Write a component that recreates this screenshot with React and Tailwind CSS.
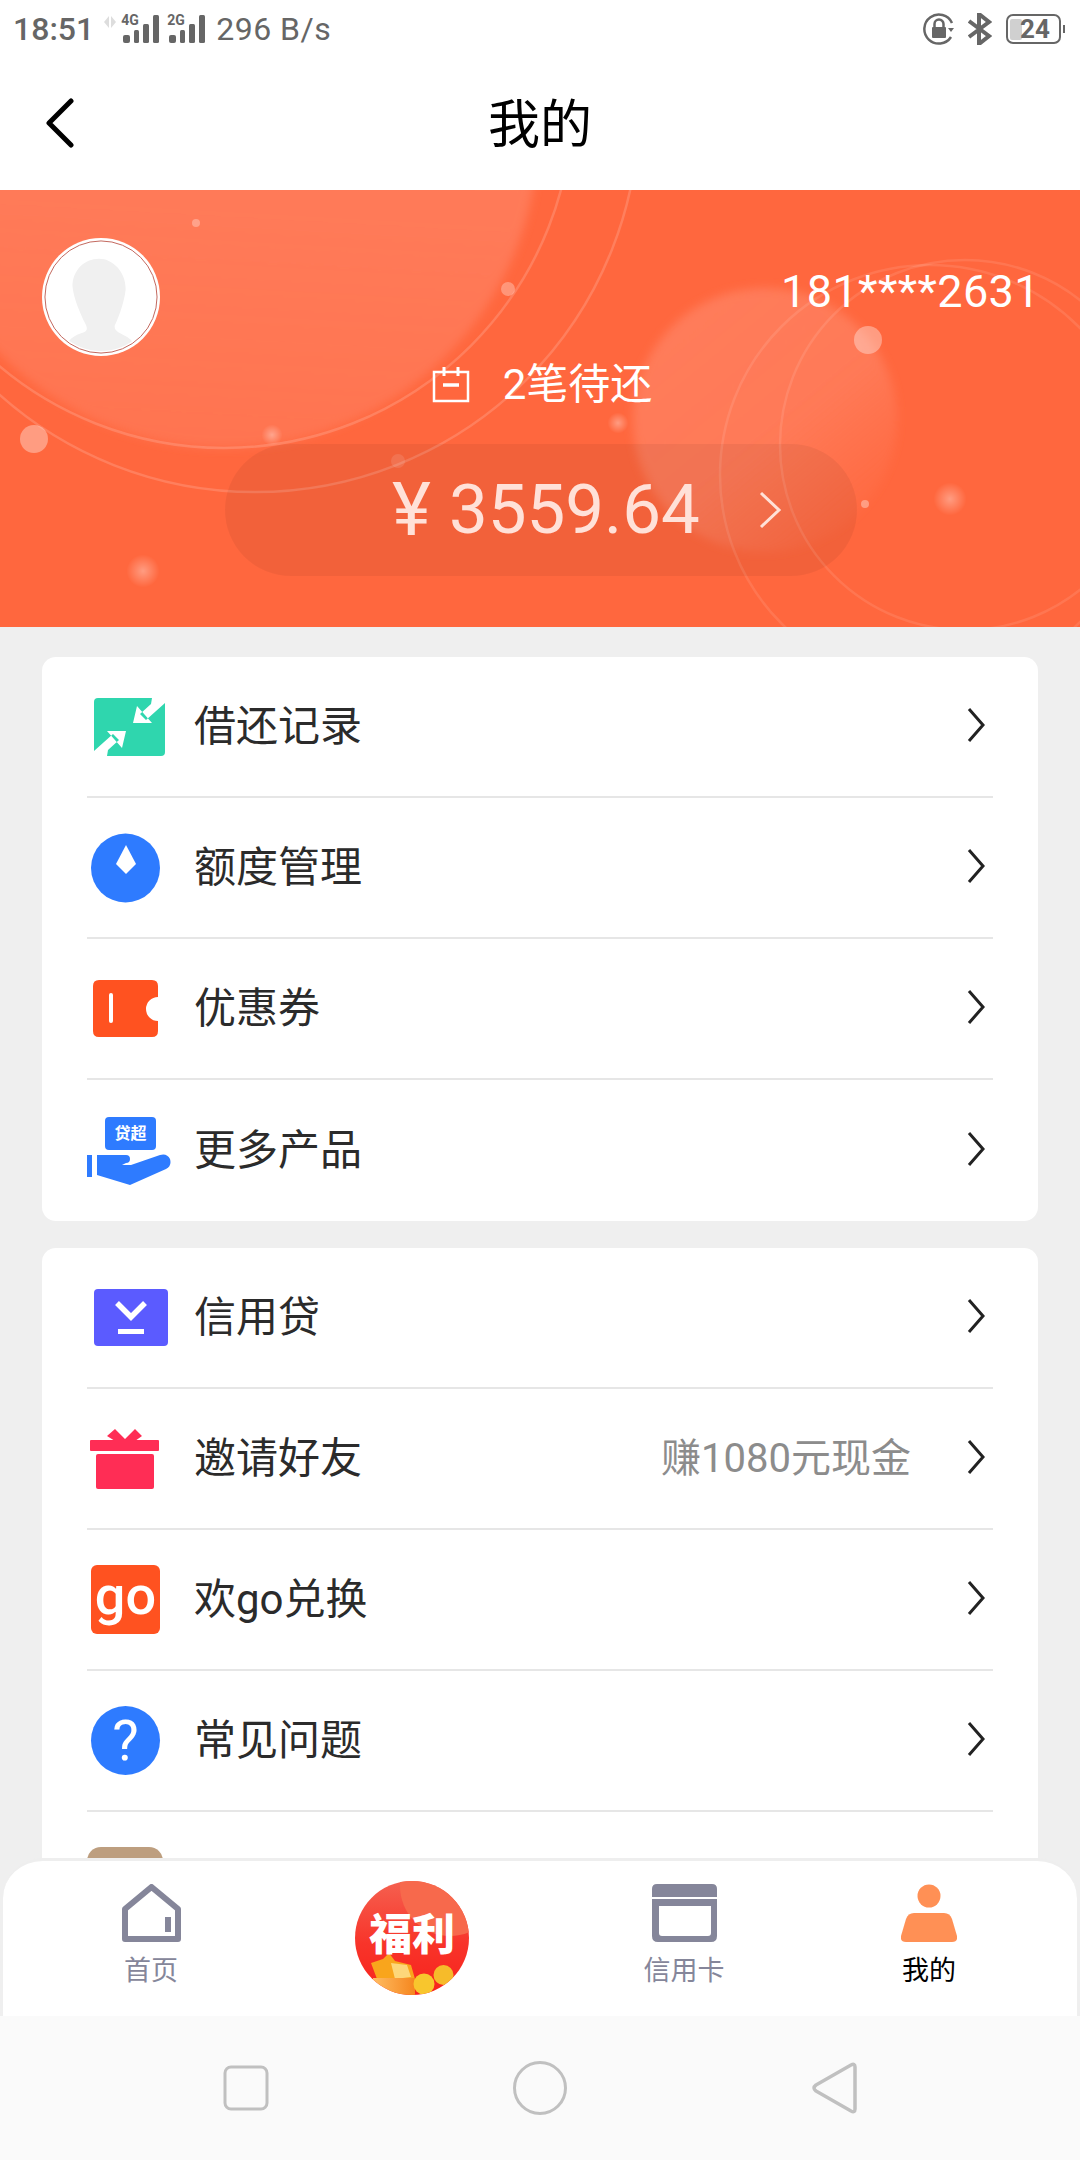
import React from "react";

function Chevron({ className = "" }) {
  return (
    <svg width="18" height="36" viewBox="0 0 18 36" className={className}>
      <path d="M2 2 L16 18 L2 34" fill="none" stroke="#222" strokeWidth="3" />
    </svg>
  );
}

function Bars({ label }) {
  return (
    <div className="relative w-[36px] h-[28px]">
      <svg width="36" height="28" viewBox="0 0 36 28" className="absolute left-0 top-0">
        <rect x="0" y="20" width="7" height="8" rx="2" fill="#666" />
        <rect x="11" y="15" width="5" height="13" rx="1.5" fill="#666" />
        <rect x="20" y="9" width="6" height="19" rx="1.5" fill="#666" />
        <rect x="30" y="0" width="6" height="28" rx="1.5" fill="#666" />
      </svg>
      <span className="absolute left-[-2px] top-[-2px] text-[14px] leading-[14px] font-bold text-[#666]">{label}</span>
    </div>
  );
}

function StatusBar() {
  return (
    <div className="h-[60px] bg-white flex items-center justify-between text-[#666]">
      <div className="flex items-center mb-[2px]">
        <span className="ml-[13px] text-[32px] leading-[40px] font-medium">18:51</span>
        <svg width="12" height="12" viewBox="0 0 12 12" className="ml-[10px] mb-[14px]">
          <path d="M5 0 V12 L0 6Z M7 0 L12 6 L7 12Z" fill="#ddd" />
        </svg>
        <div className="ml-[7px]">
          <Bars label="4G" />
        </div>
        <div className="ml-[10px]">
          <Bars label="2G" />
        </div>
        <span className="ml-[11px] text-[32px] leading-[40px] tracking-[0.5px]">296 B/s</span>
      </div>
      <div className="flex items-center mr-[15px] mb-[2px]">
        <svg width="32" height="32" viewBox="0 0 32 32">
          <path d="M29 10 A14.5 14.5 0 1 0 28 24" fill="none" stroke="#666" strokeWidth="2.5" />
          <path d="M25 15 L31 15 L28 19Z" fill="#666" />
          <rect x="9" y="14" width="14" height="11" rx="1" fill="#666" />
          <path d="M11.5 14 V11 A4.5 4.5 0 0 1 20.5 11 V14" fill="none" stroke="#666" strokeWidth="2.5" />
        </svg>
        <svg width="24" height="32" viewBox="0 0 24 32" className="ml-[13px]">
          <path d="M1 8 L21 23 L11 31 V1 L21 9 L1 24" fill="none" stroke="#666" strokeWidth="4" />
        </svg>
        <div className="relative ml-[14px] w-[55px] h-[30px] rounded-[7px] border-2 border-[#666] flex items-center">
          <div className="absolute left-[2px] top-[3px] w-[12px] h-[21px] bg-[#d0d0d0] rounded-[2px]" />
          <span className="relative ml-[12px] text-[26px] leading-[26px] font-bold text-[#666]">24</span>
        </div>
        <div className="ml-[2px] w-[2px] h-[8px] bg-[#666]" />
      </div>
    </div>
  );
}

function Header() {
  return (
    <div className="h-[130px] bg-white grid grid-cols-3 items-center">
      <svg width="30" height="50" viewBox="0 0 30 50" className="ml-[45px] mb-[5px]">
        <path d="M26 3 L4 25 L26 47" fill="none" stroke="#000" strokeWidth="5" strokeLinecap="round" strokeLinejoin="round" />
      </svg>
      <div className="text-center text-[52px] leading-[60px] text-black mt-[2px]">我的</div>
    </div>
  );
}

function BannerArt() {
  const dots = [
    [196, 33, 4, 0.3],
    [508, 99, 7, 0.3],
    [868, 150, 14, 0.35],
    [34, 249, 14, 0.35],
    [865, 314, 4, 0.35],
    [398, 271, 7, 0.12],
  ];
  const glows = [
    [272, 245, 7],
    [618, 233, 7],
    [950, 309, 11],
    [143, 381, 11],
  ];
  return (
    <svg width="1080" height="437" viewBox="0 0 1080 437" className="absolute left-0 top-0">
      <defs>
        <linearGradient id="blobA" x1="0.8" y1="0.1" x2="0.75" y2="1">
          <stop offset="0" stopColor="#ff7d5b" />
          <stop offset="0.6" stopColor="#ff7a58" />
          <stop offset="1" stopColor="#ff7a58" stopOpacity="0.7" />
        </linearGradient>
        <linearGradient id="blobB" x1="0.15" y1="0.1" x2="0.85" y2="0.95">
          <stop offset="0" stopColor="#ff7c5a" />
          <stop offset="0.55" stopColor="#ff7c5a" stopOpacity="0.9" />
          <stop offset="1" stopColor="#ff7c5a" stopOpacity="0" />
        </linearGradient>
        <radialGradient id="glow">
          <stop offset="0" stopColor="#fff" stopOpacity="0.35" />
          <stop offset="1" stopColor="#fff" stopOpacity="0" />
        </radialGradient>
        <filter id="soft" x="-20%" y="-20%" width="140%" height="140%">
          <feGaussianBlur stdDeviation="5" />
        </filter>
      </defs>
      <circle cx="224" cy="-56" r="314" fill="url(#blobA)" filter="url(#soft)" />
      <circle cx="765" cy="230" r="132" fill="url(#blobB)" filter="url(#soft)" />
      <g fill="none" stroke="#fff" strokeOpacity="0.16" strokeWidth="2.5">
        <circle cx="255" cy="-82" r="384" />
        <circle cx="224" cy="-91" r="349" />
      </g>
      <g fill="none" stroke="#fff" strokeOpacity="0.1" strokeWidth="2.5">
        <circle cx="930" cy="285" r="210" />
        <circle cx="965" cy="255" r="185" />
      </g>
      {dots.map(([x, y, r, o]) => (
        <circle key={x} cx={x} cy={y} r={r} fill="#fff" fillOpacity={o} />
      ))}
      {glows.map(([x, y, r]) => (
        <circle key={x} cx={x} cy={y} r={r * 1.5} fill="url(#glow)" />
      ))}
    </svg>
  );
}

function Banner() {
  return (
    <div className="relative h-[437px] overflow-hidden bg-[#ff673e]">
      <BannerArt />
      <div className="relative pt-[47px]">
        <div className="h-[120px] flex items-center justify-between">
          <svg width="118" height="120" viewBox="0 0 120 120" className="ml-[42px]">
            <defs>
              <clipPath id="avatarClip">
                <circle cx="60" cy="60" r="55" />
              </clipPath>
            </defs>
            <circle cx="60" cy="60" r="60" fill="#fff" />
            <circle cx="60" cy="60" r="57" fill="none" stroke="#c2665c" strokeWidth="1" />
            <path
              clipPath="url(#avatarClip)"
              d="M58 21 C73 21 86 36 85 53 C84 63 79 79 74 89 C73 95 79 96 87 101 C93 105 96 111 97 120 L21 120 C22 109 28 101 39 97 C46 95 47 93 44 87 C39 77 32 61 31 49 C31 33 43 21 58 21 Z"
              fill="#f0f0f0"
            />
          </svg>
          <span className="mr-[40px] mb-[10px] text-[45px] leading-[50px] tracking-[0.4px] text-white">181****2631</span>
        </div>
        <div className="mt-[6px] h-[44px] flex items-center justify-center text-white text-[42px] leading-[44px]">
          <svg width="38" height="36" viewBox="0 0 38 36" className="ml-[4px]">
            <path d="M2 5 H36 V34 H2 Z" fill="none" stroke="#fff" strokeWidth="2.5" />
            <path d="M12 0 V9 M26 0 V9" stroke="#fff" strokeWidth="3" />
            <path d="M11 18 H27" stroke="#fff" strokeWidth="3.5" />
          </svg>
          <span className="ml-[33px]">2笔待还</span>
        </div>
        <div className="mt-[37px] ml-[225px] w-[632px] h-[132px] rounded-full bg-black/5 flex items-center pl-[167px] text-[#ffe1d8]">
          <span className="w-[57px] text-[74px] leading-[70px]">¥</span>
          <span className="text-[69px] leading-[70px]">3559.64</span>
          <svg width="24" height="38" viewBox="0 0 24 38" className="ml-[58px]">
            <path d="M3 2 L21 19 L3 36" fill="none" stroke="#ffe1d8" strokeWidth="3" />
          </svg>
        </div>
      </div>
    </div>
  );
}

function IconTransfer() {
  return (
    <svg width="71" height="58" viewBox="0 0 71 58" className="ml-[7px]">
      <rect width="71" height="58" rx="4" fill="#2fd6ae" />
      <path d="M58 0 H71 V5 L52 22 L46 16 L57 6Z M43 8 L39 25 H58Z" fill="#fff" />
      <path d="M13 58 H0 V53 L19 36 L25 42 L14 52Z M28 50 L32 33 H13Z" fill="#fff" />
    </svg>
  );
}

function IconQuota() {
  return (
    <svg width="69" height="70" viewBox="0 0 69 70" className="ml-[4px]">
      <circle cx="34.5" cy="35" r="34.5" fill="#2e7bff" />
      <path d="M35 12 L45 31 L35 41 L25 31Z" fill="#fff" />
    </svg>
  );
}

function IconCoupon() {
  return (
    <svg width="65" height="57" viewBox="0 0 65 57" className="ml-[6px]">
      <path d="M6 0 H59 Q65 0 65 6 V17 A12 12 0 0 0 65 41 V51 Q65 57 59 57 H6 Q0 57 0 51 V6 Q0 0 6 0Z" fill="#ff5220" />
      <rect x="16" y="13" width="4" height="30" rx="2" fill="#fff" />
    </svg>
  );
}

function IconMore() {
  return (
    <svg width="84" height="68" viewBox="0 0 84 68">
      <rect x="18" y="0" width="51" height="33" rx="4" fill="#2e7bff" />
      <text x="43.5" y="22" textAnchor="middle" fontSize="16" fontWeight="700" fill="#fff">贷超</text>
      <rect x="0" y="38" width="5" height="22" fill="#2e7bff" />
      <path d="M10 38 H39 Q43 38 43 42 Q43 46 39 46 L35 48 H44 L73 38 Q80 36 83 42 Q85 49 79 52 L43 68 L10 58Z" fill="#2e7bff" />
    </svg>
  );
}

function IconLoan() {
  return (
    <svg width="74" height="57" viewBox="0 0 74 57" className="ml-[7px]">
      <rect width="74" height="57" rx="4" fill="#5b5bff" />
      <path d="M23 14 L37 28 L51 14" fill="none" stroke="#fff" strokeWidth="5.5" />
      <rect x="24" y="40" width="26" height="5" fill="#fff" />
    </svg>
  );
}

function IconGift() {
  return (
    <svg width="69" height="60" viewBox="0 0 69 60" className="ml-[3px]">
      <path d="M17 7 L25 0 L35 10 L45 0 L52 7 L45 12 H25Z" fill="#ff2d55" />
      <rect x="0" y="11" width="69" height="11" rx="1" fill="#ff2d55" />
      <rect x="6" y="25" width="58" height="35" rx="2" fill="#ff2d55" />
    </svg>
  );
}

function IconGo() {
  return (
    <div className="ml-[4px] w-[69px] h-[69px] rounded-[6px] bg-[#ff5220] flex items-center justify-center text-white text-[54px] leading-[56px] font-medium pb-[8px]">
      go
    </div>
  );
}

function IconHelp() {
  return (
    <div className="ml-[4px] w-[69px] h-[69px] rounded-full bg-[#2e7bff] flex items-center justify-center text-white text-[56px] leading-[60px]">
      ?
    </div>
  );
}

function Row({ icon, label, extra, last }) {
  return (
    <div className={`h-[141px] flex items-center ${last ? "" : "border-b-2 border-[#e6e6e6]"}`}>
      <div className="w-[107px] shrink-0 flex items-center">{icon}</div>
      <span className="flex-1 text-[42px] leading-[50px] text-[#2b2b2b]">{label}</span>
      {extra && <span className="mr-[56px] text-[40px] leading-[50px] text-[#8c8c8c]">{extra}</span>}
      <Chevron className="mr-[8px] mb-[3px]" />
    </div>
  );
}

function BottomTabs() {
  return (
    <div className="h-[158px] bg-[#efefef] px-[3px] pt-0">
      <div className="h-full rounded-t-[40px] border-t-[3px] border-[#eeeeee] bg-white grid grid-cols-[296px_226px_318px_172px] pt-[23px]">
        <div className="flex flex-col items-center">
          <svg width="59" height="58" viewBox="0 0 59 58">
            <path d="M29.5 3 L56 25 V55 H3 V25 Z" fill="none" stroke="#85869a" strokeWidth="6" strokeLinejoin="round" />
            <rect x="43" y="33" width="6" height="15" fill="#85869a" />
          </svg>
          <span className="mt-[14px] text-[27px] leading-[30px] text-[#85869a]">首页</span>
        </div>
        <div className="flex flex-col items-center">
          <svg width="114" height="114" viewBox="0 0 114 114" className="-mt-[3px]">
            <defs>
              <clipPath id="fuliClip">
                <circle cx="57" cy="57" r="57" />
              </clipPath>
              <linearGradient id="fuliBg" x1="0" y1="0" x2="0" y2="1">
                <stop offset="0" stopColor="#f5604f" />
                <stop offset="0.55" stopColor="#f8342a" />
                <stop offset="1" stopColor="#f8221c" />
              </linearGradient>
              <linearGradient id="fuliBand" x1="0" y1="0" x2="1" y2="0">
                <stop offset="0" stopColor="#ffbd62" />
                <stop offset="1" stopColor="#f5861e" />
              </linearGradient>
            </defs>
            <g clipPath="url(#fuliClip)">
              <rect width="114" height="114" fill="url(#fuliBg)" />
              <circle cx="95" cy="5" r="50" fill="#f7694c" />
              <path d="M16 82 L28 78 L34 72 L40 80 L56 84 L60 98 H22Z" fill="#f9a51c" />
              <path d="M36 82 L52 84 L56 96 L40 98Z" fill="#fdd77a" />
              <path d="M18 97 H60 V114 H18Z" fill="url(#fuliBand)" />
              <circle cx="69" cy="103" r="10.5" fill="#f8c62d" />
              <circle cx="88.5" cy="94" r="10" fill="#f6bb2a" />
            </g>
            <text x="57" y="69" textAnchor="middle" fontSize="43" fontWeight="900" fill="#fff">福利</text>
          </svg>
        </div>
        <div className="flex flex-col items-center">
          <svg width="65" height="58" viewBox="0 0 65 58">
            <path d="M5 0 H60 Q65 0 65 5 V13 H0 V5 Q0 0 5 0Z" fill="#85869a" />
            <path d="M0 15 H65 V52 Q65 58 59 58 H6 Q0 58 0 52Z M7 22 V49 Q7 52 10 52 H56 Q59 52 59 49 V22Z" fill="#85869a" fillRule="evenodd" />
          </svg>
          <span className="mt-[14px] text-[27px] leading-[30px] text-[#85869a]">信用卡</span>
        </div>
        <div className="flex flex-col items-center">
          <svg width="56" height="58" viewBox="0 0 56 58">
            <circle cx="28" cy="12" r="11.5" fill="#ff9055" />
            <path d="M13 29 H43 Q49 29 51 35 L56 52 Q57 58 51 58 H5 Q-1 58 0 52 L5 35 Q7 29 13 29Z" fill="#ff9055" />
          </svg>
          <span className="mt-[14px] text-[27px] leading-[30px] text-black">我的</span>
        </div>
      </div>
    </div>
  );
}

function NavBar() {
  return (
    <div className="h-[144px] bg-[#fafafa] relative flex items-start">
      <svg width="46" height="46" viewBox="0 0 46 46" className="ml-[223px] mt-[49px]">
        <rect x="2" y="2" width="42" height="42" rx="6" fill="none" stroke="#c0c0c0" strokeWidth="3" />
      </svg>
      <svg width="54" height="54" viewBox="0 0 54 54" className="ml-[244px] mt-[45px]">
        <circle cx="27" cy="27" r="25.5" fill="none" stroke="#c0c0c0" strokeWidth="3" />
      </svg>
      <svg width="46" height="52" viewBox="0 0 46 52" className="ml-[244px] mt-[46px]">
        <path d="M5 23 L40 3 Q44 1 44 5 V47 Q44 51 40 49 L5 29 Q1 26 5 23Z" fill="none" stroke="#c0c0c0" strokeWidth="3.5" strokeLinejoin="round" />
      </svg>
    </div>
  );
}

export default function App() {
  return (
    <div className="w-[1080px] h-[2160px] overflow-hidden flex flex-col bg-[#efefef] [font-family:Roboto,'Noto_Sans_CJK_SC',sans-serif]">
      <StatusBar />
      <Header />
      <Banner />
      <div className="flex-1 overflow-hidden px-[42px] pt-[30px]">
        <div className="bg-white rounded-[14px] px-[45px]">
          <Row icon={<IconTransfer />} label="借还记录" />
          <Row icon={<IconQuota />} label="额度管理" />
          <Row icon={<IconCoupon />} label="优惠券" />
          <Row icon={<IconMore />} label="更多产品" last />
        </div>
        <div className="mt-[27px] bg-white rounded-t-[14px] px-[45px] h-[700px]">
          <Row icon={<IconLoan />} label="信用贷" />
          <Row icon={<IconGift />} label="邀请好友" extra="赚1080元现金" />
          <Row icon={<IconGo />} label="欢go兑换" />
          <Row icon={<IconHelp />} label="常见问题" />
          <div className="mt-[35px] w-[76px] h-[57px] rounded-[14px] bg-[#bd9e7f]" />
        </div>
      </div>
      <BottomTabs />
      <NavBar />
    </div>
  );
}
